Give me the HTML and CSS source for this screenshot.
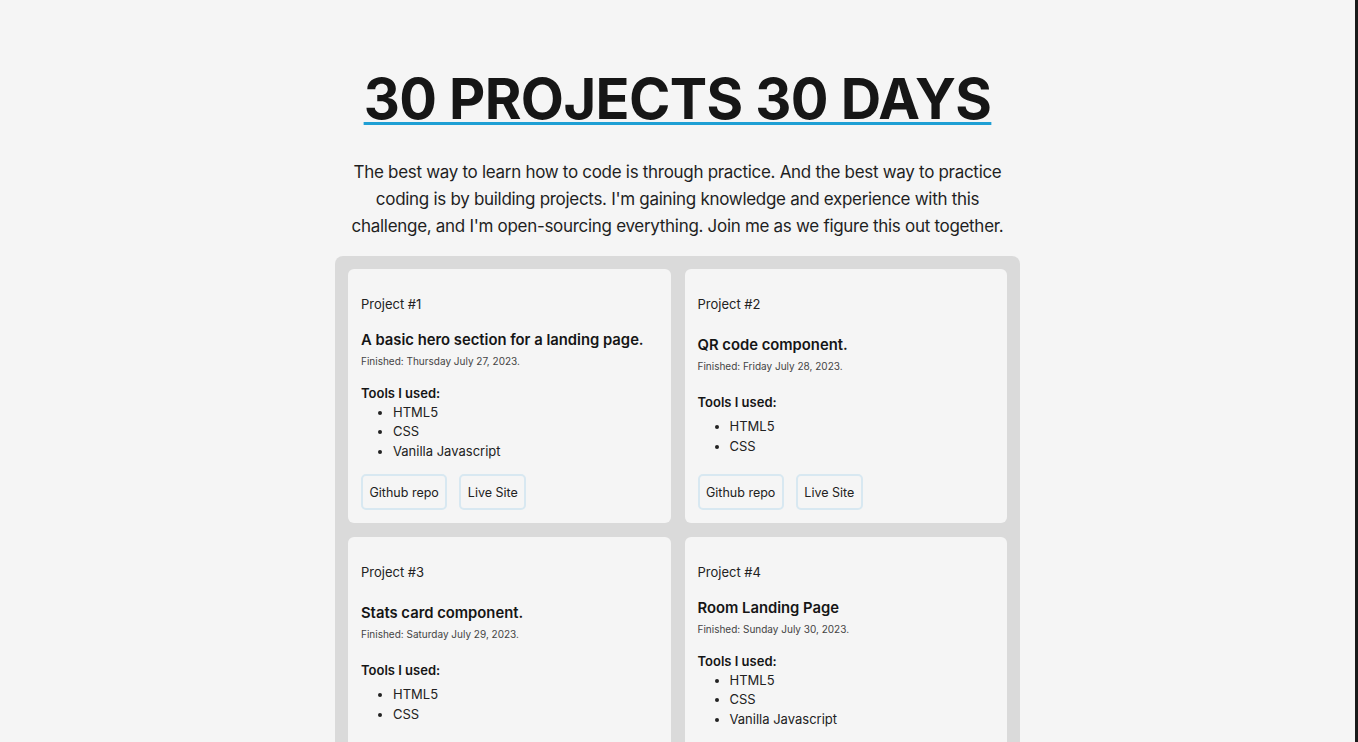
FILE: index.html
```html
<!DOCTYPE html>
<html lang="en">
<head>
<meta charset="utf-8">
<title>30 Projects 30 Days</title>
<link rel="stylesheet" href="styles.css">
</head>
<body>
<main class="page">
  <header class="hero">
    <h1 class="hero-title">30 PROJECTS 30 DAYS</h1>
    <p class="hero-text">The best way to learn how to code is through practice. And the best way to practice coding is by building projects. I'm gaining knowledge and experience with this challenge, and I'm open-sourcing everything. Join me as we figure this out together.</p>
  </header>
  <section class="grid">
    <article class="card">
      <p class="card-num">Project #1</p>
      <div class="card-head">
        <h2 class="card-title">A basic hero section for a landing page.</h2>
        <p class="card-date">Finished: Thursday July 27, 2023.</p>
      </div>
      <h3 class="card-tools">Tools I used:</h3>
      <ul class="card-list"><li>HTML5</li><li>CSS</li><li>Vanilla Javascript</li></ul>
      <div class="card-actions"><a class="btn" href="#">Github repo</a><a class="btn" href="#">Live Site</a></div>
    </article>
    <article class="card">
      <p class="card-num">Project #2</p>
      <div class="card-head">
        <h2 class="card-title">QR code component.</h2>
        <p class="card-date">Finished: Friday July 28, 2023.</p>
      </div>
      <h3 class="card-tools">Tools I used:</h3>
      <ul class="card-list"><li>HTML5</li><li>CSS</li></ul>
      <div class="card-actions"><a class="btn" href="#">Github repo</a><a class="btn" href="#">Live Site</a></div>
    </article>
    <article class="card">
      <p class="card-num">Project #3</p>
      <div class="card-head">
        <h2 class="card-title">Stats card component.</h2>
        <p class="card-date">Finished: Saturday July 29, 2023.</p>
      </div>
      <h3 class="card-tools">Tools I used:</h3>
      <ul class="card-list"><li>HTML5</li><li>CSS</li></ul>
      <div class="card-actions"><a class="btn" href="#">Github repo</a><a class="btn" href="#">Live Site</a></div>
    </article>
    <article class="card">
      <p class="card-num">Project #4</p>
      <div class="card-head">
        <h2 class="card-title">Room Landing Page</h2>
        <p class="card-date">Finished: Sunday July 30, 2023.</p>
      </div>
      <h3 class="card-tools">Tools I used:</h3>
      <ul class="card-list"><li>HTML5</li><li>CSS</li><li>Vanilla Javascript</li></ul>
      <div class="card-actions"><a class="btn" href="#">Github repo</a><a class="btn" href="#">Live Site</a></div>
    </article>
  </section>
</main>
</body>
</html>
```

FILE: styles.css
```css
* { box-sizing: border-box; }
html { background: #f5f5f5; }
body {
  margin: 0;
  font-family: Inter, "Noto Sans", sans-serif;
  color: #161616;
  background: #f5f5f5;
  border-right: 3px solid #1a1a1a;
  min-height: 742px;
}
.page {
  display: flex;
  flex-direction: column;
  align-items: center;
  padding-top: 64px;
}
.hero {
  display: flex;
  flex-direction: column;
  align-items: center;
}
.hero-title {
  margin: 0;
  font-size: 56px;
  font-weight: 700;
  line-height: 70px;
  letter-spacing: -0.6px;
  color: #161616;
  text-decoration: underline;
  text-decoration-color: #1f9fd4;
  text-decoration-thickness: 3px;
  text-underline-offset: 3px;
}
.hero-text {
  margin: 25px 0 0;
  width: 656px;
  text-align: center;
  font-size: 17px;
  letter-spacing: -0.3px;
  line-height: 27px;
  color: #1f1f1f;
}
.grid {
  margin-top: 16px;
  width: 685px;
  background: #dadada;
  border-radius: 8px;
  padding: 13px;
  display: grid;
  grid-template-columns: 1fr 1fr;
  column-gap: 14px;
  row-gap: 14px;
}
.card {
  background: #f5f5f5;
  border-radius: 6px;
  padding: 27px 13px 13px;
  display: flex;
  flex-direction: column;
  justify-content: space-between;
}
.card-num { margin: 0 0 19px; font-size: 13px; line-height: 16px; color: #222; }
.card-head { display: flex; flex-direction: column; gap: 6px; }
.card-title { margin: 0; font-size: 14.8px; font-weight: 600; line-height: 18px; color: #151515; }
.card-date { margin: 0; font-size: 10px; line-height: 13px; color: #444; }
.card-tools { margin: 16.5px 0 2px; font-size: 13px; font-weight: 600; line-height: 16px; color: #151515; }
.card-list {
  margin: 0 0 13px;
  padding-left: 32px;
  font-size: 13px;
  line-height: 19.5px;
  color: #222;
}
.card-actions { display: flex; gap: 12px; }
.btn {
  display: inline-flex;
  align-items: center;
  height: 36px;
  padding: 0 6.5px;
  border: 2px solid #d8e8f1;
  border-radius: 5px;
  font-size: 12.5px;
  color: #222;
  text-decoration: none;
}
```
